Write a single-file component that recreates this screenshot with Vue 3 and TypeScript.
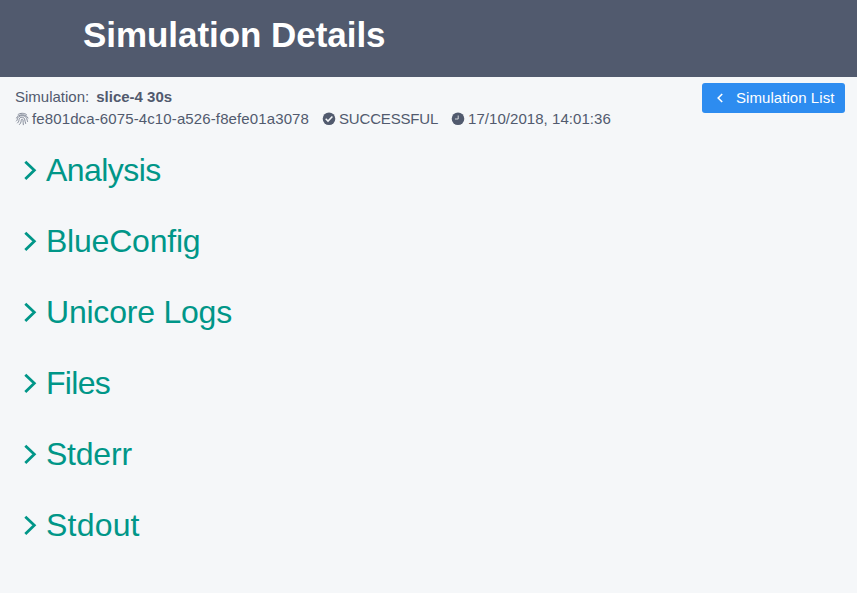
<script setup lang="ts">
const sections: string[] = ['Analysis', 'BlueConfig', 'Unicore Logs', 'Files', 'Stderr', 'Stdout']
</script>

<template>
  <div class="page">
    <header class="header"><h1>Simulation Details</h1></header>
    <section class="info">
      <div class="details">
        <div class="row"><span class="label">Simulation:</span><strong class="name">slice-4 30s</strong></div>
        <div class="row">
          <span class="item id">
            <svg class="icon finger" viewBox="0 0 14 14"><g fill="none" stroke="currentColor" stroke-width=".9" stroke-linecap="round"><path d="M3 2.6C5 .8 9.500.8 11.500 2.600M1.500 6C3 1.600 11.500 1.600 13 6M1.400 9c1.300-1 .8-2.300 1.600-3.400C5 2.600 10.500 3 11.700 6.500c.5 1.300.5 2.200.8 3M2.600 11c2-1.600.9-3.400 2-4.800 1.300-1.700 4.300-1.200 5 .8.600 1.700.4 3 1 4.500M4.500 12.500C6.800 10.500 5.800 8.500 6.500 7.500c.6-.7 1.300-.3 1.500.5.300 1.700 0 3 .3 4.700"/></g></svg>
            <span class="txt">fe801dca-6075-4c10-a526-f8efe01a3078</span>
          </span>
          <span class="item status">
            <svg class="icon" viewBox="0 0 14 14"><circle cx="7" cy="6.700" r="6.300" fill="currentColor"/><path d="M3.700 6.800l2.300 2.300 4.400-4.700" fill="none" stroke="#f5f7f9" stroke-width="1.500"/></svg>
            <span class="txt">SUCCESSFUL</span>
          </span>
          <span class="item date">
            <svg class="icon" viewBox="0 0 14 14"><circle cx="7" cy="6.700" r="6.300" fill="currentColor"/><path d="M7.200 3.500v3.500H4" fill="none" stroke="#f5f7f9" stroke-width=".8"/></svg>
            <span class="txt">17/10/2018, 14:01:36</span>
          </span>
        </div>
      </div>
      <button class="back" type="button">
        <svg viewBox="0 0 8 10"><path d="M6.200 1L2.200 5l4 4" fill="none" stroke="currentColor" stroke-width="1.600"/></svg>
        <span>Simulation List</span>
      </button>
    </section>
    <main class="sections">
      <div v-for="s in sections" :key="s" class="section">
        <svg viewBox="0 0 14 20"><path d="M2.300 1.700l9 8.600-9 8.600" fill="none" stroke="currentColor" stroke-width="2.800"/></svg>
        <span>{{ s }}</span>
      </div>
    </main>
  </div>
</template>

<style>
body { margin: 0; background: #f5f7f9; }
</style>
<style scoped>
.page { min-height: 593px; background: #f5f7f9; color: #515a6e; font-family: "Liberation Sans", Arial, sans-serif; }
.header { height: 77px; box-sizing: border-box; padding: 13px 0 0 83px; background: #515a6e; }
h1 { margin: 0; font-size: 35px; line-height: 43px; letter-spacing: -.05px; color: #fff; white-space: nowrap; }
.info { display: flex; justify-content: space-between; align-items: flex-start; padding: 6px 12px 0 15px; height: 58px; box-sizing: border-box; }
.details { padding-top: 3px; font-size: 15px; line-height: 22px; white-space: nowrap; }
.row { display: flex; height: 22px; }
.name { margin-left: 7px; }
.item { display: flex; align-items: center; gap: 3px; }
.id { width: 294px; letter-spacing: .12px; }
.status { width: 116px; margin-left: 13px; letter-spacing: -.17px; }
.date { margin-left: 13px; letter-spacing: .05px; }
.icon { width: 14px; height: 14px; flex: none; }
.finger { opacity: .75; }
.back { display: flex; align-items: center; width: 143px; height: 30px; padding: 0 0 0 14px; border: 0; border-radius: 3px; background: #2d8cf0; color: #fff; font: 15px "Liberation Sans", Arial, sans-serif; letter-spacing: .06px; white-space: nowrap; }
.back svg { width: 8px; height: 10px; margin-right: 12px; }
.back span { padding-bottom: 2px; }
.section { display: flex; align-items: center; height: 71px; padding-left: 23px; color: #009688; font-size: 32px; letter-spacing: -.22px; }
.section svg { width: 14px; height: 20px; margin: 0 9px 1px 0; }
.section:nth-child(1) { letter-spacing: -.55px; }
.section:nth-child(4) { letter-spacing: -.7px; }
.section:nth-child(6) { letter-spacing: .2px; }
</style>
